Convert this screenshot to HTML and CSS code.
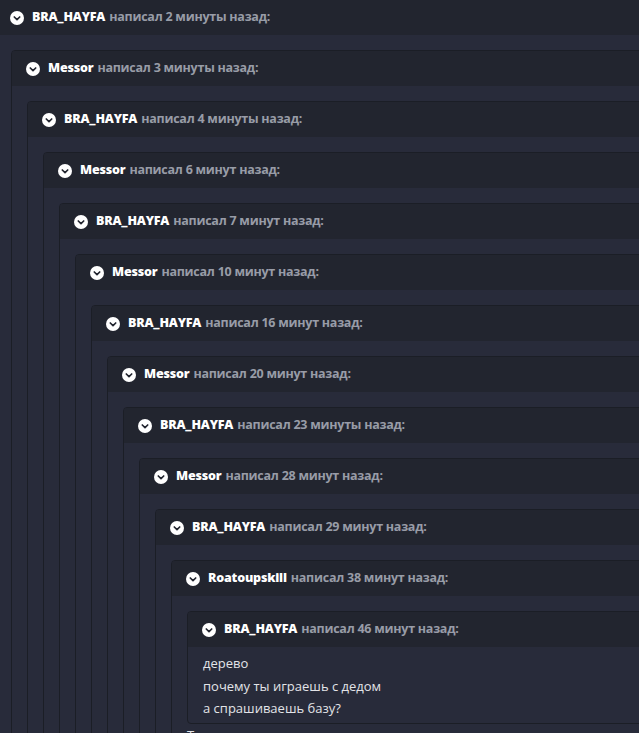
FILE: index.html
```html
<!DOCTYPE html>
<html lang="ru">
<head>
<meta charset="utf-8">
<link rel="stylesheet" href="styles.css">
</head>
<body>
<div class="page">
<div class="quote outer">
 <div class="qh"><span class="ic"><svg viewBox="0 0 14 14"><circle cx="7" cy="7" r="7" fill="#fff"/><path d="M4.3 6 L7 8.6 L9.7 6" fill="none" stroke="#22252f" stroke-width="1.7" stroke-linecap="round" stroke-linejoin="round"/></svg></span><b class="u">BRA_HAYFA</b><span class="m">написал 2 минуты назад:</span></div>
 <div class="qb">
 <div class="quote">
  <div class="qh"><span class="ic"><svg viewBox="0 0 14 14"><circle cx="7" cy="7" r="7" fill="#fff"/><path d="M4.3 6 L7 8.6 L9.7 6" fill="none" stroke="#22252f" stroke-width="1.7" stroke-linecap="round" stroke-linejoin="round"/></svg></span><b class="u">Messor</b><span class="m">написал 3 минуты назад:</span></div>
  <div class="qb">
  <div class="quote">
   <div class="qh"><span class="ic"><svg viewBox="0 0 14 14"><circle cx="7" cy="7" r="7" fill="#fff"/><path d="M4.3 6 L7 8.6 L9.7 6" fill="none" stroke="#22252f" stroke-width="1.7" stroke-linecap="round" stroke-linejoin="round"/></svg></span><b class="u">BRA_HAYFA</b><span class="m">написал 4 минуты назад:</span></div>
   <div class="qb">
   <div class="quote">
    <div class="qh"><span class="ic"><svg viewBox="0 0 14 14"><circle cx="7" cy="7" r="7" fill="#fff"/><path d="M4.3 6 L7 8.6 L9.7 6" fill="none" stroke="#22252f" stroke-width="1.7" stroke-linecap="round" stroke-linejoin="round"/></svg></span><b class="u">Messor</b><span class="m">написал 6 минут назад:</span></div>
    <div class="qb">
    <div class="quote">
     <div class="qh"><span class="ic"><svg viewBox="0 0 14 14"><circle cx="7" cy="7" r="7" fill="#fff"/><path d="M4.3 6 L7 8.6 L9.7 6" fill="none" stroke="#22252f" stroke-width="1.7" stroke-linecap="round" stroke-linejoin="round"/></svg></span><b class="u">BRA_HAYFA</b><span class="m">написал 7 минут назад:</span></div>
     <div class="qb">
     <div class="quote">
      <div class="qh"><span class="ic"><svg viewBox="0 0 14 14"><circle cx="7" cy="7" r="7" fill="#fff"/><path d="M4.3 6 L7 8.6 L9.7 6" fill="none" stroke="#22252f" stroke-width="1.7" stroke-linecap="round" stroke-linejoin="round"/></svg></span><b class="u">Messor</b><span class="m">написал 10 минут назад:</span></div>
      <div class="qb">
      <div class="quote">
       <div class="qh"><span class="ic"><svg viewBox="0 0 14 14"><circle cx="7" cy="7" r="7" fill="#fff"/><path d="M4.3 6 L7 8.6 L9.7 6" fill="none" stroke="#22252f" stroke-width="1.7" stroke-linecap="round" stroke-linejoin="round"/></svg></span><b class="u">BRA_HAYFA</b><span class="m">написал 16 минут назад:</span></div>
       <div class="qb">
       <div class="quote">
        <div class="qh"><span class="ic"><svg viewBox="0 0 14 14"><circle cx="7" cy="7" r="7" fill="#fff"/><path d="M4.3 6 L7 8.6 L9.7 6" fill="none" stroke="#22252f" stroke-width="1.7" stroke-linecap="round" stroke-linejoin="round"/></svg></span><b class="u">Messor</b><span class="m">написал 20 минут назад:</span></div>
        <div class="qb">
        <div class="quote">
         <div class="qh"><span class="ic"><svg viewBox="0 0 14 14"><circle cx="7" cy="7" r="7" fill="#fff"/><path d="M4.3 6 L7 8.6 L9.7 6" fill="none" stroke="#22252f" stroke-width="1.7" stroke-linecap="round" stroke-linejoin="round"/></svg></span><b class="u">BRA_HAYFA</b><span class="m">написал 23 минуты назад:</span></div>
         <div class="qb">
         <div class="quote">
          <div class="qh"><span class="ic"><svg viewBox="0 0 14 14"><circle cx="7" cy="7" r="7" fill="#fff"/><path d="M4.3 6 L7 8.6 L9.7 6" fill="none" stroke="#22252f" stroke-width="1.7" stroke-linecap="round" stroke-linejoin="round"/></svg></span><b class="u">Messor</b><span class="m">написал 28 минут назад:</span></div>
          <div class="qb">
          <div class="quote">
           <div class="qh"><span class="ic"><svg viewBox="0 0 14 14"><circle cx="7" cy="7" r="7" fill="#fff"/><path d="M4.3 6 L7 8.6 L9.7 6" fill="none" stroke="#22252f" stroke-width="1.7" stroke-linecap="round" stroke-linejoin="round"/></svg></span><b class="u">BRA_HAYFA</b><span class="m">написал 29 минут назад:</span></div>
           <div class="qb">
           <div class="quote">
            <div class="qh"><span class="ic"><svg viewBox="0 0 14 14"><circle cx="7" cy="7" r="7" fill="#fff"/><path d="M4.3 6 L7 8.6 L9.7 6" fill="none" stroke="#22252f" stroke-width="1.7" stroke-linecap="round" stroke-linejoin="round"/></svg></span><b class="u">Roatoupskill</b><span class="m">написал 38 минут назад:</span></div>
            <div class="qb">
            <div class="quote">
             <div class="qh"><span class="ic"><svg viewBox="0 0 14 14"><circle cx="7" cy="7" r="7" fill="#fff"/><path d="M4.3 6 L7 8.6 L9.7 6" fill="none" stroke="#22252f" stroke-width="1.7" stroke-linecap="round" stroke-linejoin="round"/></svg></span><b class="u">BRA_HAYFA</b><span class="m">написал 46 минут назад:</span></div>
             <div class="qb text">
              <p>дерево</p>
              <p>почему ты играешь с дедом</p>
              <p>а спрашиваешь базу?</p>
             </div>
            </div>
            <p class="after">Так и есть</p>
            </div>
           </div>
           </div>
          </div>
          </div>
         </div>
         </div>
        </div>
        </div>
       </div>
       </div>
      </div>
      </div>
     </div>
     </div>
    </div>
    </div>
   </div>
   </div>
  </div>
  </div>
 </div>
 </div>
</div>
</div>
</body>
</html>
```
FILE: styles.css
```css
html, body {
  margin: 0;
  padding: 0;
  background: #282b3a;
  overflow: hidden;
}
body {
  font-family: "Open Sans", "Noto Sans", sans-serif;
  font-size: 13px;
  color: #e3e4e8;
}
.page {
  width: 1100px;
  margin: -1px 0 0 -5px;
}
.quote {
  border: 1px solid #1b1e26;
  border-radius: 4px;
  background: #282b3a;
}
.qb > .quote {
  margin-top: 15px;
}
.qh {
  display: flex;
  align-items: center;
  box-sizing: border-box;
  height: 35px;
  padding: 0 0 2px 14px;
  background: #22252f;
  border-radius: 3px 3px 0 0;
  white-space: nowrap;
  font-size: 12.5px;
  font-weight: 700;
}
.ic {
  display: flex;
  width: 14px;
  height: 14px;
  margin: 2px 8px 0 0;
}
.ic svg { width: 14px; height: 14px; }
.u {
  color: #ffffff;
  margin-right: 4px;
  letter-spacing: -0.2px;
}
.m {
  color: #989ca7;
  letter-spacing: -0.25px;
}
.qb {
  padding: 0 0 0 15px;
}
.qb.text {
  padding: 5px 15px 3px 15px;
}
.text p, .after {
  margin: 0;
  line-height: 22.5px;
  font-size: 13px;
}
.after {
  color: #e3e4e8;
}
```
